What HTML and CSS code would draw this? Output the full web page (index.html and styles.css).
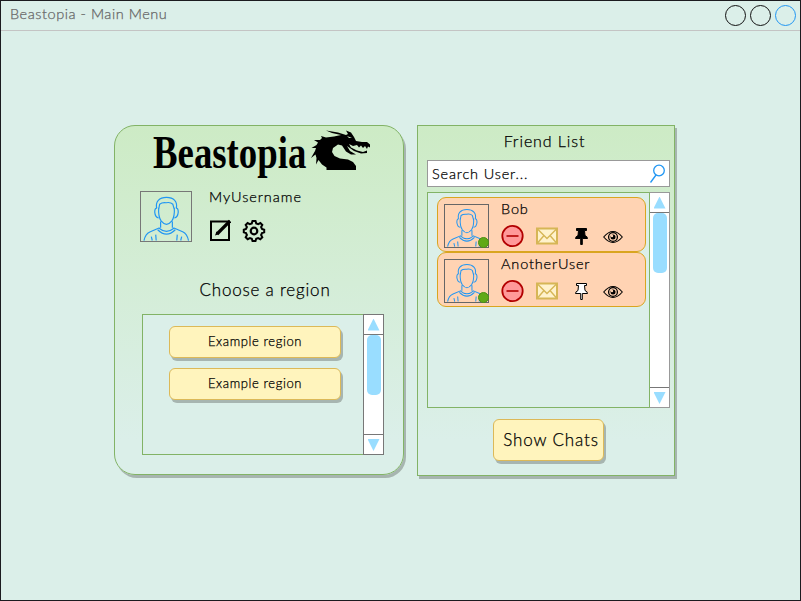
FILE: index.html
```html
<!DOCTYPE html>
<html lang="en">
<head>
<meta charset="utf-8">
<title>Beastopia - Main Menu</title>
<link rel="stylesheet" href="styles.css">
</head>
<body>
<svg class="defs" width="0" height="0" aria-hidden="true">
  <symbol id="person" viewBox="0 0 50 50">
    <g fill="none" stroke="#2196f3" stroke-width="1.2">
      <path d="M15.500 16.500C14 10 18 5.500 25.500 5.500S37 10 35.500 16.500M17.500 18L18.500 12.500Q21 10.500 25 11Q29.500 10 32 12.500L33.500 18M17.500 16Q17 25 20 29.500Q25.500 36.500 31 29.500Q34 25 33.500 16M16 16.500Q13.500 16 13.500 20.500Q14 26 17.500 26.500M35 16.500Q37.500 16 37.500 20.500Q37 26 33.500 26.500M19.500 30V36.500M31.500 30V36.500M18 37Q25.500 43.500 33 37M16.500 38.500Q25.500 47.500 34.500 38.500M18.500 36.500L9 40.500Q4 42.500 2.500 49.500M32.500 36.500L42 40.500Q46.500 42.500 48 49.500M10 45.500L11 49.500M14.500 43.500L15 49.500M41 45.500L40 49.500M36.500 43.500L36 49.500"/>
    </g>
  </symbol>
  <symbol id="block" viewBox="0 0 24 24">
    <circle cx="11.500" cy="12" r="10.200" fill="#ff9999" stroke="#b20000" stroke-width="1.800"/>
    <path d="M5.500 12H17.500" stroke="#b20000" stroke-width="1.600"/>
  </symbol>
  <symbol id="mail" viewBox="0 0 24 18">
    <path d="M2 1.500H22V16.500H2Z" fill="#fff2cc" stroke="#d6b656" stroke-width="2"/>
    <path d="M2.500 2L12 11.500L21.500 2M2.500 16L9 8.500M21.500 16L15 8.500" fill="none" stroke="#d6b656" stroke-width="1.400"/>
  </symbol>
  <symbol id="pin" viewBox="0 0 15 19">
    <path d="M2.500 1.500H12.500V3.500H10.500L11 8.500Q13.500 9.500 13.500 11.500H8.300V17.500H6.700V11.500H1.500Q1.500 9.500 4 8.500L4.500 3.500H2.500Z" stroke="#000" stroke-width="1"/>
  </symbol>
  <symbol id="eye" viewBox="0 0 20 14">
    <path d="M.7 7Q10-4 19.300 7Q10 18 .7 7Z" fill="none" stroke="#000" stroke-width="1.100"/>
    <circle cx="10" cy="7" r="4.400" fill="none" stroke="#000" stroke-width="1.300"/>
    <circle cx="10" cy="7" r="2.500"/>
    <circle cx="9" cy="6" r="1.200" fill="#ffd3b3"/>
  </symbol>
</svg>
<div class="window">
  <header class="titlebar">
    <h1 class="window-title">Beastopia - Main Menu</h1>
    <div class="controls"><i></i><i></i><i class="active"></i></div>
  </header>
  <main class="content">
    <section class="menu">
      <div class="brand">
        <span class="wordmark">Beastopia</span>
        <svg class="dragon" viewBox="0 0 60 42">
          <path d="M15.500 40V37.500L11 34.500L7.500 30L5 34.500L5.500 28L4.500 24.500L0 28L4 21L5 18L.5 18L5.500 15L7 12.500L3 10L9 10L11 8L10 6L15 7.500L23 6.500L30 5L21 3L15 .5L27 2.500L35 5L37 4L35 .5L40 2.500L43 7L45 11L51 12L56 12L59 14.500L59 17.500L57 16.500L56 19L54 16L52 18L50 15.500L48 17.500L46 15L42 16L38 14L40 17.500L46 20.500L52 22L56 20.500L56 23L50 23.500L43 21L36 16L39 21L45 24.500L40 24.500L35 21.500L31 15.500L27 14.500L22 18L21 22L23.500 26L29 28.500L37 29.500L42 32L45 36V40Z"/>
          <path d="M36 6L41 8L38 8Z" fill="#d0edca"/>
        </svg>
      </div>
      <div class="profile">
        <svg class="portrait"><use href="#person"/></svg>
        <div class="profile-info">
          <span class="username">MyUsername</span>
          <div class="profile-actions">
            <svg width="22" height="22" viewBox="0 0 22 22"><path d="M2 2.600H20V20.900H2Z" fill="none" stroke="#000" stroke-width="2"/><path d="M8 15L21 2" stroke="#000" stroke-width="3.200"/><path d="M6 16.500L7.500 12.500L10.500 15Z"/></svg>
            <svg width="24" height="24" viewBox="0 0 24 24"><path d="M10.500 2H13.500L14.200 4.400L16.200 5.200L18.400 4L20.300 5.900L19.100 8L20 10L22.200 10.700V13.300L20 14L19.100 16L20.300 18.200L18.300 20.200L16.100 19L14.200 19.800L13.500 22H10.500L9.800 19.800L7.900 19L5.700 20.200L3.700 18.200L4.900 16L4 14L1.800 13.300V10.700L4 10L4.900 8L3.700 5.900L5.600 4L7.800 5.200L9.800 4.400Z" fill="none" stroke="#000" stroke-width="2"/><circle cx="12" cy="12" r="3.300" fill="none" stroke="#000" stroke-width="2.200"/></svg>
          </div>
        </div>
      </div>
      <h2 class="region-title">Choose a region</h2>
      <div class="regions">
        <div class="region-list">
          <button class="btn region">Example region</button>
          <button class="btn region">Example region</button>
        </div>
        <div class="scrollbar"><span class="arrow up"></span><span class="track"><i class="thumb"></i></span><span class="arrow down"></span></div>
      </div>
    </section>
    <aside class="friends">
      <h2 class="friends-title">Friend List</h2>
      <div class="search"><span class="search-text">Search User...</span>
        <svg width="18" height="20" viewBox="0 0 18 20"><g fill="none" stroke="#2196f3" stroke-width="1.300"><circle cx="11" cy="6.500" r="5.300"/><path d="M8 11L2.500 18.500"/></g></svg>
      </div>
      <div class="friend-area">
        <div class="friend-list">
          <article class="friend">
            <div class="avatar"><svg><use href="#person"/></svg><i class="online"></i></div>
            <div class="friend-info"><span class="friend-name">Bob</span>
              <div class="actions"><svg class="i-block"><use href="#block"/></svg><svg class="i-mail"><use href="#mail"/></svg><svg class="i-pin"><use href="#pin"/></svg><svg class="i-eye"><use href="#eye"/></svg></div>
            </div>
          </article>
          <article class="friend">
            <div class="avatar"><svg><use href="#person"/></svg><i class="online"></i></div>
            <div class="friend-info"><span class="friend-name">AnotherUser</span>
              <div class="actions"><svg class="i-block"><use href="#block"/></svg><svg class="i-mail"><use href="#mail"/></svg><svg class="i-pin unpinned"><use href="#pin"/></svg><svg class="i-eye"><use href="#eye"/></svg></div>
            </div>
          </article>
        </div>
        <div class="scrollbar"><span class="arrow up"></span><span class="track"><i class="thumb"></i></span><span class="arrow down"></span></div>
      </div>
      <button class="btn chats">Show Chats</button>
    </aside>
  </main>
</div>
</body>
</html>
```
FILE: styles.css
```css
* { box-sizing: border-box; }
body { margin: 0; font-family: Lato, "Open Sans", sans-serif; font-weight: 300; color: #000; -webkit-text-stroke: .25px; }
h1, h2 { margin: 0; font-weight: 300; white-space: nowrap; }
svg { display: block; flex: none; }
.defs { position: absolute; }
.window { width: 801px; height: 601px; border: 1px solid #1b1b1f; background: #dbefe9; }
.titlebar { height: 30px; border-bottom: 1px solid #c4c4c4; display: flex; justify-content: space-between; padding: 0 4px 0 9px; }
.window-title { font-size: 14.5px; line-height: 26px; color: #666; letter-spacing: .55px; }
.controls { display: flex; gap: 4px; padding-top: 4px; }
.controls i { width: 21px; height: 21px; border: 1.3px solid #111; border-radius: 50%; }
.controls .active { border-color: #2196f3; }
.content { display: flex; align-items: flex-start; gap: 13px; padding: 94px 0 0 113px; }
.menu, .friends { border: 1px solid #82b366; background: linear-gradient(#cdebc5, #dbefe9 90%); box-shadow: 2px 3px 0 #a7b5b0; }
.menu { width: 290px; height: 350px; border-radius: 21px; }
.brand { height: 58px; padding: 4px 0 0 38px; display: flex; }
.wordmark { width: 158px; height: 50px; font: bold 46px/46px "Liberation Serif", serif; color: #000; transform: scaleX(.8); transform-origin: left; -webkit-text-stroke: 0; }
.dragon { width: 60px; height: 42px; }
.profile { display: flex; gap: 17px; padding: 7px 0 0 25px; height: 60px; }
.portrait { width: 52px; height: 51px; border: 1.5px solid #777; }
.profile-info { display: flex; flex-direction: column; }
.username { font-size: 14.5px; line-height: 16px; margin-top: -2px; letter-spacing: .95px; }
.profile-actions { display: flex; gap: 11px; padding-top: 14px; }
.region-title { margin: 35px 0 0 12px; font-size: 17px; line-height: 22px; letter-spacing: .8px; text-align: center; }
.regions { width: 242px; height: 141px; margin: 13px 0 0 27px; border: 1px solid #82b366; background: #dbefe9; display: flex; justify-content: space-between; }
.region-list { display: flex; flex-direction: column; gap: 10px; padding: 11px 0 0 26px; }
.btn { display: block; padding: 0; border: 1.5px solid #dcb958; border-radius: 6px; background: #fff4bd; box-shadow: 2px 3px 0 #a7b5b0; font-family: inherit; font-weight: 300; color: #000; white-space: nowrap; -webkit-text-stroke: .25px; }
.region { width: 172px; height: 32px; padding-bottom: 3px; font-size: 13px; line-height: 26px; letter-spacing: .6px; }
.scrollbar { width: 21px; margin: -1px; border: 1px solid #777; background: #fff; display: flex; flex-direction: column; flex: none; }
.arrow { height: 20px; display: grid; place-items: center; flex: none; }
.arrow::after { content: ""; width: 12px; height: 12px; background: #99ddff; clip-path: polygon(50% 0, 100% 100%, 0 100%); }
.up { border-bottom: 1px solid #777; }
.down { border-top: 1px solid #777; }
.down::after { transform: scaleY(-1); }
.track { flex: 1; }
.thumb { display: block; width: 14px; height: 60px; margin: 0 auto; border-radius: 5px; background: #99ddff; }
.friends { width: 258px; height: 351px; padding: 0 4px 0 9px; display: flex; flex-direction: column; }
.friends-title { height: 34px; font-size: 16px; line-height: 30px; letter-spacing: .9px; text-align: center; padding-right: 8px; }
.search { height: 27px; width: 243px; background: #fff; border: 1px solid #999; display: flex; justify-content: space-between; align-items: center; padding: 0 3px 0 4px; }
.search-text { font-size: 14.5px; letter-spacing: .85px; }
.friend-area { width: 243px; height: 216px; margin-top: 5px; border: 1px solid #82b366; background: #dbefe9; display: flex; justify-content: space-between; }
.friend-area .scrollbar { border-color: #999; border-left-color: #82b366; }
.friend-list { padding: 4px 0 0 9px; }
.friend { width: 209px; height: 55px; border: 1.5px solid #d9a520; border-radius: 9px; background: #ffd3b3; display: flex; padding: 6px 0 0 6px; gap: 12px; }
.avatar { width: 45px; height: 44px; border: 1px solid #666; position: relative; flex: none; }
.avatar svg { width: 43px; height: 42px; }
.online { position: absolute; right: -1px; bottom: -1px; width: 11px; height: 11px; border-radius: 50%; background: #60a917; border: 1px solid #4b8f12; }
.friend-name { display: block; margin-top: -3px; font-size: 14.5px; line-height: 16px; letter-spacing: .85px; }
.actions { display: flex; align-items: center; height: 24px; margin-top: 7px; }
.i-block { width: 24px; height: 24px; }
.i-mail { width: 24px; height: 18px; margin-left: 10px; }
.i-pin { width: 15px; height: 19px; margin-left: 15px; fill: #000; }
.unpinned { fill: #fff; }
.i-eye { width: 20px; height: 14px; margin: 2px 0 0 14px; }
.chats { width: 111px; height: 42px; margin: 11px 0 0 66px; font-size: 17px; letter-spacing: .85px; padding: 0 0 2px 5px; }
```
